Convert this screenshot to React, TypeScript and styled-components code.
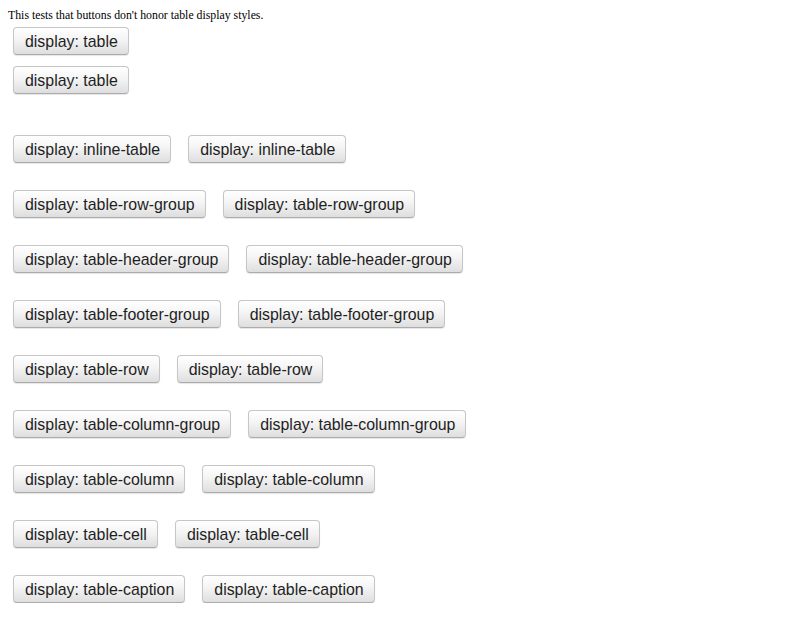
import React from "react";
import styled, { createGlobalStyle } from "styled-components";

const Global = createGlobalStyle`
  html, body { margin: 0; padding: 0; background: #fff; }
  body { font-family: "Liberation Serif", "Times New Roman", serif; }
`;

const Page = styled.div`
  padding: 8px 8px 0 13px;
  display: flex;
  flex-direction: column;
`;

const Title = styled.div`
  margin-left: -5px;
  font-size: 11.8px;
  line-height: 14px;
  color: #000;
`;

const Row = styled.div<{ $mt: number }>`
  display: flex;
  gap: 17px;
  margin-top: ${(p) => p.$mt}px;
`;

const Btn = styled.button`
  box-sizing: border-box;
  height: 28px;
  padding: 2px 10px 0 11px;
  font-family: "Liberation Sans", Arial, sans-serif;
  font-size: 15.9px;
  color: #1e1e1e;
  background: linear-gradient(to bottom, #ffffff 0%, #f4f4f4 45%, #dedede 100%);
  border: 1px solid #c6c6c6;
  border-bottom-color: #ababab;
  border-radius: 4px;
  box-shadow: 0 1px 1px rgba(0, 0, 0, 0.1);
  white-space: nowrap;
  cursor: default;
`;

const rows: { label: string; count: number; mt: number }[] = [
  { label: "table", count: 1, mt: 5 },
  { label: "table", count: 1, mt: 11 },
  { label: "inline-table", count: 2, mt: 41 },
  { label: "table-row-group", count: 2, mt: 27 },
  { label: "table-header-group", count: 2, mt: 27 },
  { label: "table-footer-group", count: 2, mt: 27 },
  { label: "table-row", count: 2, mt: 27 },
  { label: "table-column-group", count: 2, mt: 27 },
  { label: "table-column", count: 2, mt: 27 },
  { label: "table-cell", count: 2, mt: 27 },
  { label: "table-caption", count: 2, mt: 27 },
];

export default function App() {
  return (
    <Page>
      <Global />
      <Title>This tests that buttons don't honor table display styles.</Title>
      {rows.map((r, i) => (
        <Row key={i} $mt={r.mt}>
          {Array.from({ length: r.count }).map((_, j) => (
            <Btn key={j}>display: {r.label}</Btn>
          ))}
        </Row>
      ))}
    </Page>
  );
}
